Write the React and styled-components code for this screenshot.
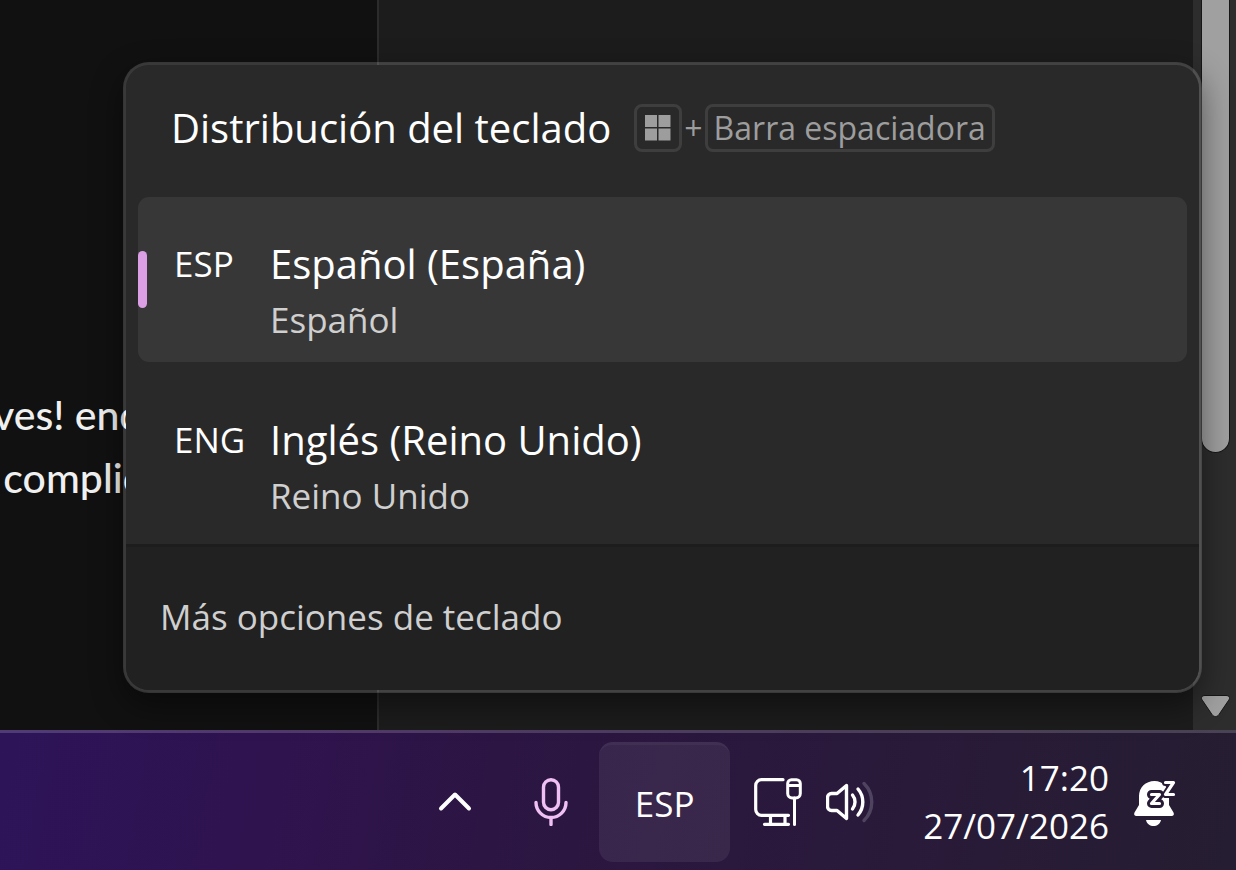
import React, { useState } from 'react';
import styled, { createGlobalStyle } from 'styled-components';

const GlobalStyle = createGlobalStyle`
  * {
    box-sizing: border-box;
  }
  body {
    margin: 0;
    overflow: hidden;
    background: #1c1c1c;
    color: #fff;
    font-family: 'Open Sans', 'Noto Sans', sans-serif;
  }
  button {
    margin: 0;
    padding: 0;
    border: none;
    background: none;
    color: inherit;
    font: inherit;
    text-align: left;
  }
`;

const Desktop = styled.div`
  position: relative;
  display: flex;
  flex-direction: column;
  height: 100vh;
`;

const Workspace = styled.main`
  display: flex;
  flex: 1;
  min-height: 0;
`;

const Sidebar = styled.div`
  width: 379px;
  padding-top: 383px;
  border-right: 2px solid #2c2c2c;
  background: #111;
  overflow: hidden;
`;

const Message = styled.p`
  margin: 0 0 0 -7px;
  color: #f0f0f0;
  font-family: Lato, sans-serif;
  font-size: 41px;
  font-weight: 500;
  line-height: 63px;
  white-space: pre;
`;

const Content = styled.div`
  flex: 1;
  background: #1c1c1c;
`;

const ScrollTrack = styled.div`
  display: flex;
  flex-direction: column;
  justify-content: space-between;
  width: 43px;
  padding: 0 6px 12px 8px;
  background: #2d2d2d;
`;

const ScrollThumb = styled.div`
  height: 453px;
  border: 1px solid #161616;
  border-top: none;
  border-radius: 0 0 15px 15px;
  background: #a0a0a0;
`;

const Flyout = styled.section`
  position: absolute;
  left: 123px;
  right: 34px;
  bottom: 177px;
  border: 3px solid rgba(255, 255, 255, 0.17);
  border-radius: 26px;
  background: #292929;
  background-clip: padding-box;
  box-shadow: 0 12px 32px rgba(0, 0, 0, 0.45);
  overflow: hidden;
`;

const FlyoutHeader = styled.header`
  display: flex;
  align-items: center;
  gap: 23px;
  padding: 39px 45px 45px;
`;

const Title = styled.h1`
  margin: 0;
  font-size: 40px;
  font-weight: 400;
  line-height: 48px;
`;

const Shortcut = styled.div`
  display: flex;
  align-items: center;
  gap: 2px;
  color: #9d9d9d;
  font-size: 32px;
  line-height: 42px;
`;

const Key = styled.kbd`
  display: flex;
  align-items: center;
  justify-content: center;
  min-width: 48px;
  height: 48px;
  padding: 0 6px;
  border: 3px solid #3e3e3e;
  border-radius: 8px;
  font-family: inherit;
`;

const LayoutList = styled.div`
  display: flex;
  flex-direction: column;
  gap: 11px;
  padding: 0 12px 6px;
`;

const LayoutItem = styled.button`
  position: relative;
  display: grid;
  grid-template-columns: 96px 1fr;
  padding: 39px 36px 14px;
  border-radius: 11px;
  background: ${(props) => (props.$selected ? '#373737' : 'transparent')};
  line-height: 56px;
`;

const Accent = styled.span`
  position: absolute;
  top: 54px;
  left: 0;
  width: 9px;
  height: 57px;
  border-radius: 5px;
  background: #dc9fe6;
`;

const Code = styled.span`
  font-size: 35px;
`;

const Name = styled.span`
  font-size: 40px;
`;

const Detail = styled.span`
  grid-column: 2;
  color: #cfcfcf;
  font-size: 35px;
`;

const FlyoutFooter = styled.footer`
  padding: 42px 34px 45px;
  border-top: 3px solid #1d1d1d;
  background: #212121;
`;

const MoreLink = styled.a`
  display: block;
  color: #cfcfcf;
  font-size: 35px;
  line-height: 56px;
  text-decoration: none;
`;

const Taskbar = styled.footer`
  display: flex;
  align-items: center;
  justify-content: flex-end;
  height: 140px;
  padding-right: 31px;
  border-top: 3px solid rgba(255, 255, 255, 0.17);
  background: linear-gradient(
      100deg,
      #2d1459 0%,
      #2f134f 22%,
      #2c1543 40%,
      #2a183d 60%,
      #281b37 80%,
      #251d31 100%
    )
    border-box;
`;

const TrayButton = styled.button`
  display: flex;
  align-items: center;
  gap: 24px;
  height: 120px;
  padding: 0 24px;
`;

const LanguageButton = styled.button`
  width: 131px;
  height: 120px;
  border-top: 3px solid rgba(255, 255, 255, 0.04);
  border-radius: 14px;
  background: rgba(255, 255, 255, 0.07);
  font-size: 35px;
  text-align: center;
`;

const Clock = styled.button`
  padding-left: 25px;
  font-size: 35px;
  line-height: 48px;
  text-align: right;
`;

const Icon = ({ children, color = '#fff' }) => (
  <svg
    width="48"
    height="48"
    viewBox="0 0 48 48"
    fill="none"
    stroke={color}
    strokeWidth="3.4"
    strokeLinecap="round"
    strokeLinejoin="round"
    aria-hidden="true"
  >
    {children}
  </svg>
);

const WindowsIcon = () => (
  <svg width="28" height="28" viewBox="0 0 28 28" fill="#9d9d9d" aria-hidden="true">
    <path d="M1 1h12v12H1zM14.500 1h12v12h-12zM1 14.500h12v12H1zM14.500 14.500h12v12h-12z" />
  </svg>
);

const ArrowDown = () => (
  <svg width="29" height="24" viewBox="0 0 29 24" aria-hidden="true">
    <path
      d="M4 1.500h21c3.200 0 4.500 2.300 2.700 4.700L18 20.500c-1.900 2.700-5.100 2.700-7 0L1.300 6.200C-.5 3.800.8 1.500 4 1.500z"
      fill="#a0a0a0"
      stroke="#161616"
    />
  </svg>
);

const ChevronIcon = () => (
  <Icon>
    <path d="M10 30.500 24 16.500 38 30.500" strokeWidth="4" />
  </Icon>
);

const MicIcon = () => (
  <Icon color="#f0c0f5">
    <rect x="16.500" y="1.700" width="15" height="30" rx="7.500" />
    <path d="M9 24.500a15 15 0 0 0 30 0M24 40v6.500" />
  </Icon>
);

const NetworkIcon = () => (
  <Icon>
    <path d="M29 1.700H7.500a5.800 5.800 0 0 0-5.800 5.800v24a5.800 5.800 0 0 0 5.800 5.800H34.500" strokeWidth="3.200" />
    <path d="M10.500 46.300H34.500M16.500 38v8M31 38v8" strokeWidth="3.200" />
    <path d="M33.700 7.500V5.500a3.800 3.800 0 0 1 3.800-3.800h5a3.800 3.800 0 0 1 3.800 3.800v10a4.500 4.500 0 0 1-4.500 4.500h-3.600a4.500 4.500 0 0 1-4.500-4.500zH46" strokeWidth="3" />
    <path d="M40.500 20v26.500" strokeWidth="3" />
  </Icon>
);

const SoundIcon = () => (
  <Icon>
    <path d="M20.500 7.500 11 15.500H5.500a4 4 0 0 0-4 4v9a4 4 0 0 0 4 4H11l9.500 8z" />
    <path d="M26.500 17a11 11 0 0 1 0 14" />
    <path d="M32 11a20 20 0 0 1 0 26" />
    <path d="M38 5.500a26 26 0 0 1 0 37" stroke="#4f4460" />
  </Icon>
);

const BellIcon = () => (
  <Icon>
    <path
      d="M21.500 3C12.500 3 6 9.500 6 18v9L1.500 34.500C.5 36.500 1.500 38 3.500 38h35c2 0 3-1.500 2-3.500L36 27v-9C36 9.500 30 3 21.500 3z"
      fill="#fff"
      stroke="none"
    />
    <path d="M13 42h15c-1 4-4 6-7.500 6S14 46 13 42z" fill="#fff" stroke="none" />
    <path d="M18.500 16.500h8l-8 9h8" stroke="#271b35" strokeWidth="9" />
    <path d="M32.500 4.500h8l-8 12h8" stroke="#271b35" strokeWidth="7" />
    <path d="M18.500 16.500h8l-8 9h8M32.500 4.500h8l-8 12h8" strokeWidth="3.200" />
  </Icon>
);

const layouts = [
  { code: 'ESP', name: 'Español (España)', detail: 'Español' },
  { code: 'ENG', name: 'Inglés (Reino Unido)', detail: 'Reino Unido' },
];

const KeyboardFlyout = ({ selected, onSelect }) => (
  <Flyout>
    <FlyoutHeader>
      <Title>Distribución del teclado</Title>
      <Shortcut>
        <Key>
          <WindowsIcon />
        </Key>
        <span>+</span>
        <Key>Barra espaciadora</Key>
      </Shortcut>
    </FlyoutHeader>
    <LayoutList>
      {layouts.map(({ code, name, detail }) => (
        <LayoutItem
          key={code}
          $selected={code === selected}
          aria-pressed={code === selected}
          onClick={() => onSelect(code)}
        >
          {code === selected && <Accent />}
          <Code>{code}</Code>
          <Name>{name}</Name>
          <Detail>{detail}</Detail>
        </LayoutItem>
      ))}
    </LayoutList>
    <FlyoutFooter>
      <MoreLink href="#teclado">Más opciones de teclado</MoreLink>
    </FlyoutFooter>
  </Flyout>
);

const App = () => {
  const [selected, setSelected] = useState('ESP');

  return (
    <>
      <GlobalStyle />
      <Desktop>
        <Workspace>
          <Sidebar>
            <Message>{'ves! enc\n complic'}</Message>
          </Sidebar>
          <Content />
          <ScrollTrack>
            <ScrollThumb />
            <ArrowDown />
          </ScrollTrack>
        </Workspace>
        <Taskbar>
          <TrayButton aria-label="Mostrar iconos ocultos">
            <ChevronIcon />
          </TrayButton>
          <TrayButton aria-label="Micrófono">
            <MicIcon />
          </TrayButton>
          <LanguageButton>{selected}</LanguageButton>
          <TrayButton aria-label="Red y volumen">
            <NetworkIcon />
            <SoundIcon />
          </TrayButton>
          <Clock>
            17:20
            <br />
            27/07/2026
          </Clock>
          <TrayButton aria-label="Notificaciones">
            <BellIcon />
          </TrayButton>
        </Taskbar>
        <KeyboardFlyout selected={selected} onSelect={setSelected} />
      </Desktop>
    </>
  );
};

export default App;
